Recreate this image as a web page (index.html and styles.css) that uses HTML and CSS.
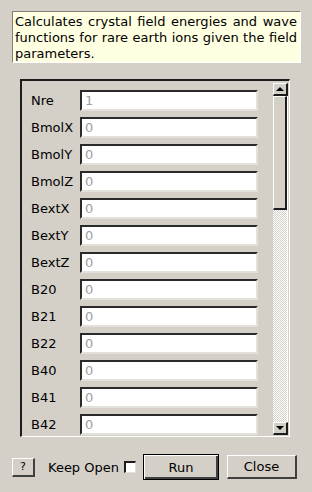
FILE: index.html
```html
<!DOCTYPE html>
<html lang="en">
<head>
    <meta charset="UTF-8">
    <title>Crystal Field</title>
    <link rel="stylesheet" href="styles.css">
</head>
<body>
    <div class="dialog">
        <!-- Description -->
        <p class="description">Calculates crystal field energies and wave functions for rare earth ions given the field parameters.</p>

        <!-- Parameter list -->
        <div class="param-frame">
            <div class="param-list">
                <div class="param-row"><label>Nre</label><input type="text" placeholder="1"></div>
                <div class="param-row"><label>BmolX</label><input type="text" placeholder="0"></div>
                <div class="param-row"><label>BmolY</label><input type="text" placeholder="0"></div>
                <div class="param-row"><label>BmolZ</label><input type="text" placeholder="0"></div>
                <div class="param-row"><label>BextX</label><input type="text" placeholder="0"></div>
                <div class="param-row"><label>BextY</label><input type="text" placeholder="0"></div>
                <div class="param-row"><label>BextZ</label><input type="text" placeholder="0"></div>
                <div class="param-row"><label>B20</label><input type="text" placeholder="0"></div>
                <div class="param-row"><label>B21</label><input type="text" placeholder="0"></div>
                <div class="param-row"><label>B22</label><input type="text" placeholder="0"></div>
                <div class="param-row"><label>B40</label><input type="text" placeholder="0"></div>
                <div class="param-row"><label>B41</label><input type="text" placeholder="0"></div>
                <div class="param-row"><label>B42</label><input type="text" placeholder="0"></div>
            </div>

            <!-- Scrollbar -->
            <div class="scrollbar">
                <div class="scroll-btn"><span class="arrow-up"></span></div>
                <div class="scroll-track">
                    <div class="scroll-thumb"></div>
                </div>
                <div class="scroll-btn"><span class="arrow-down"></span></div>
            </div>
        </div>

        <!-- Buttons -->
        <div class="button-bar">
            <button class="btn btn-help">?</button>
            <span class="keep-open">Keep Open</span>
            <span class="checkbox"></span>
            <button class="btn btn-run">Run</button>
            <button class="btn btn-close">Close</button>
        </div>
    </div>
</body>
</html>
```

FILE: styles.css
```css
* {
    margin: 0;
    padding: 0;
    box-sizing: border-box;
}

body {
    width: 312px;
    height: 492px;
    background-color: #d4d0c8;
    font-family: 'DejaVu Sans', sans-serif;
    font-size: 13px;
    color: #000;
    overflow: hidden;
}

.dialog {
    display: flex;
    flex-direction: column;
    padding: 11px 11px 0 12px;
}

/* Description */
.description {
    width: 289px;
    height: 52px;
    padding: 2px 3px 0 2px;
    background-color: #ffffe1;
    border-top: 1px solid #808080;
    border-left: 1px solid #808080;
    border-right: 1px solid #ffffff;
    border-bottom: 1px solid #ffffff;
    line-height: 16px;
    text-align: justify;
}

/* Parameter frame */
.param-frame {
    display: flex;
    margin: 16px 0 0 8px;
    width: 270px;
    height: 358px;
    border-top: 2px solid #1c1c1c;
    border-left: 2px solid #1c1c1c;
    border-right: 1px solid #ffffff;
    border-bottom: 1px solid #ffffff;
}

.param-list {
    flex: 1;
    overflow: hidden;
    padding: 9px 0 0 9px;
}

.param-row {
    display: flex;
    align-items: center;
    height: 21px;
    margin-bottom: 6px;
}

.param-row label {
    width: 49px;
}

.param-row input {
    width: 178px;
    height: 21px;
    padding: 0 3px;
    font-family: 'DejaVu Sans', sans-serif;
    font-size: 13px;
    background-color: #fff;
    border-top: 2px solid #2a2a2a;
    border-left: 2px solid #2a2a2a;
    border-right: 2px solid #e4e0da;
    border-bottom: 2px solid #e4e0da;
    outline: none;
}

.param-row input::placeholder {
    color: #a0a0a0;
}

/* Scrollbar */
.scrollbar {
    display: flex;
    flex-direction: column;
    width: 15px;
    margin: 2px 1px 1px 0;
}

.scroll-btn {
    display: flex;
    align-items: center;
    justify-content: center;
    height: 13px;
    background-color: #d4d0c8;
    border-top: 1px solid #ffffff;
    border-left: 1px solid #ffffff;
    border-right: 2px solid #1c1c1c;
    border-bottom: 2px solid #1c1c1c;
}

.arrow-up {
    width: 0;
    height: 0;
    border-left: 4px solid transparent;
    border-right: 4px solid transparent;
    border-bottom: 4px solid #000;
}

.arrow-down {
    width: 0;
    height: 0;
    border-left: 4px solid transparent;
    border-right: 4px solid transparent;
    border-top: 4px solid #000;
}

.scroll-track {
    flex: 1;
    background: repeating-conic-gradient(#d4d0c8 0 25%, #ffffff 0 50%) 0 0 / 2px 2px;
    border-right: 1px solid #ffffff;
}

.scroll-thumb {
    height: 114px;
    background-color: #d4d0c8;
    border-top: 1px solid #ffffff;
    border-left: 1px solid #ffffff;
    border-right: 2px solid #1c1c1c;
    border-bottom: 2px solid #1c1c1c;
}

/* Button bar */
.button-bar {
    display: flex;
    align-items: center;
    margin-top: 17px;
}

.btn {
    font-family: 'DejaVu Sans', sans-serif;
    font-size: 13px;
    color: #000;
    background-color: #d4d0c8;
    border-top: 1px solid #ffffff;
    border-left: 1px solid #ffffff;
    border-right: 2px solid #404040;
    border-bottom: 2px solid #404040;
}

.btn-help {
    width: 23px;
    height: 19px;
    font-size: 11px;
}

.keep-open {
    margin-left: 13px;
}

.checkbox {
    width: 12px;
    height: 12px;
    margin-left: 5px;
    background-color: #fff;
    border-top: 2px solid #1c1c1c;
    border-left: 2px solid #1c1c1c;
    border-right: 1px solid #e4e0da;
    border-bottom: 1px solid #e4e0da;
}

.btn-run {
    width: 76px;
    height: 26px;
    margin-left: 7px;
    border: 1px solid #000;
    box-shadow: inset 1px 1px 0 #ffffff, inset -2px -2px 0 #404040;
}

.btn-close {
    width: 70px;
    height: 24px;
    margin-left: 8px;
}
```
